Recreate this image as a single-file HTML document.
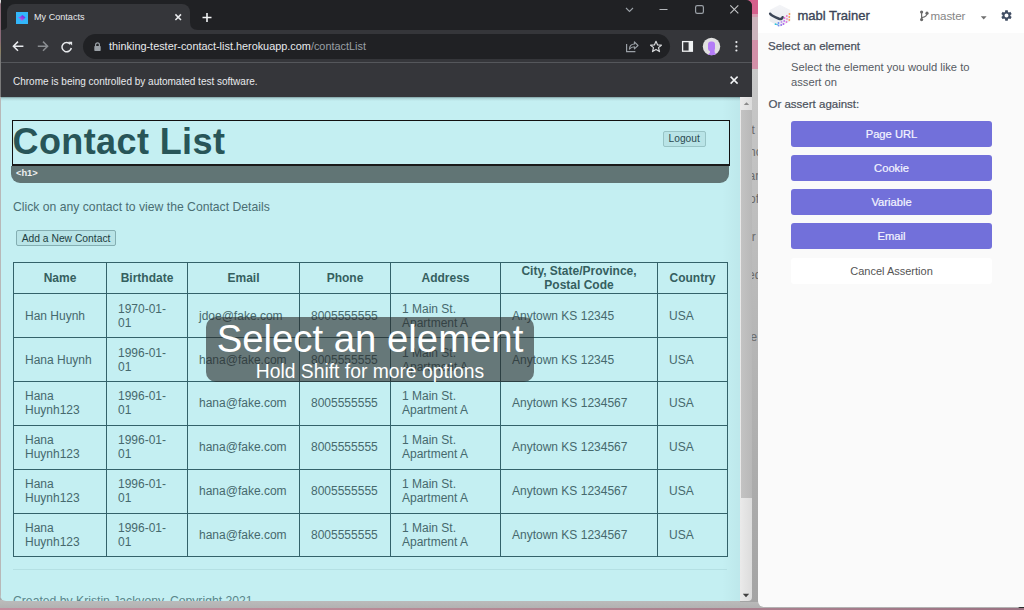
<!DOCTYPE html>
<html><head><meta charset="utf-8">
<style>
*{box-sizing:border-box;margin:0;padding:0}
html,body{width:1024px;height:610px;overflow:hidden;background:#a9a9a9;font-family:"Liberation Sans",sans-serif}
.a{position:absolute}
.nw{white-space:nowrap}
#pink{left:0;top:607.7px;width:1024px;height:3px;background:linear-gradient(90deg,#c48c9e,#b88a96 40%,#a77d8c 80%,#9a7282)}
#shade{left:0;top:600px;width:1024px;height:8px;background:linear-gradient(180deg,#bcbcbc,#b2b2b2)}
#strip{left:740px;top:0;width:20px;height:602px;background:linear-gradient(180deg,#d4608c 0,#d4608c 13.8px,#d89ab0 13.8px,#d89ab0 17px,#ccb5bd 17px,#ccb5bd 40px,#d290a8 40px,#d290a8 69px,#c8c8c8 69px,#a4a4a4 100%)}
#browser{left:1px;top:0;width:751px;height:97px;background:#35363a;border-top-right-radius:6px;overflow:hidden}
#frame{left:0;top:0;width:751px;height:30px;background:#202124}
#tab{left:6px;top:4px;width:183px;height:28px;background:#35363a;border-radius:8px 8px 0 0}
#omni{left:82px;top:34px;width:587px;height:25px;background:#202124;border-radius:13px}
#sep{left:0;top:62px;width:751px;height:1px;background:#55575b}
#info{left:0;top:63px;width:751px;height:34px;background:#35363a}
#page{left:0;top:97px;width:740px;height:504px;background:#c4eff2;border-bottom-left-radius:6px;overflow:hidden}
#sb{left:740px;top:97px;width:12px;height:504px;background:linear-gradient(90deg,#eaeaea,#dcdcdc);border-bottom-right-radius:4px;overflow:hidden}
#mabl{left:758px;top:0;width:266px;height:607px;background:#fafafa;border-bottom-left-radius:6px;overflow:hidden}
#mhead{left:0;top:0;width:266px;height:32.6px;background:#fff}
.btn{left:33px;width:201px;height:26.2px;background:#7270da;border-radius:3px;color:#f4f4ff;font-size:11.2px;text-align:center;line-height:26px;-webkit-text-stroke:0.2px #f4f4ff}

#hl{left:11.5px;top:23px;width:718px;height:45.6px;border:1px solid #111;border-bottom:2px solid #1a1a1a}
#hlbar{left:11px;top:68.5px;width:717.5px;height:17.2px;background:#617575;border-radius:0 0 9px 9px;color:#eef0f0;font-size:9.3px;padding:2.6px 0 0 5px;font-weight:bold}
#h1{left:12.5px;top:24px;font-size:36px;font-weight:bold;color:#285558;line-height:42px;letter-spacing:0.4px}
#logout{left:662.8px;top:33.8px;width:42.8px;height:16.5px;border:1px solid #98c4c6;border-radius:2px;background:#b9e4e7;font-size:10.2px;color:#2a4a50;text-align:center;line-height:14.5px}
#para{left:13px;top:102.5px;font-size:12.2px;color:#4a6e72;line-height:14px}
#addbtn{left:16.3px;top:132.5px;width:99.5px;height:16.2px;border:1px solid #84aeb2;border-radius:2px;background:#b9e4e7;font-size:10.3px;color:#213d40;text-align:center;line-height:15.5px}
#tbl{left:13px;top:165px;border-collapse:collapse;table-layout:fixed;color:#46696d;font-size:12px;line-height:14px}
#tbl td,#tbl th{border:1px solid #33626a;padding:0 11px;vertical-align:middle;text-align:left;height:43.85px}
#tbl th{font-weight:bold;text-align:center;color:#35605f;height:31.3px;padding:0 4px}
#hr{left:13px;top:472px;width:714px;height:1px;background:#b4e0e3}
#footer{left:13px;top:497px;font-size:12.2px;color:#5a868a;line-height:14px}
#ov{left:206px;top:220px;width:328px;height:65px;background:rgba(40,40,40,0.6);border-radius:10px}
#ovt1{left:206px;top:222px;width:328px;text-align:center;font-size:38.3px;color:#fff;line-height:40px}
#ovt2{left:206px;top:265px;width:328px;text-align:center;font-size:19.3px;color:#fff;line-height:20px}
</style></head><body>
<div id="shade" class="a"></div>
<div id="pink" class="a"></div>
<svg class="a" style="left:1016px;top:602px" width="8" height="8"><path d="M8 1 L8 6 L2 6 Q5 5 8 1 Z" fill="#2a2c2c"/></svg>
<div id="strip" class="a"></div>
<div class="a" style="left:0;top:0;width:1px;height:97px;background:linear-gradient(180deg,#ddd 0,#ddd 2px,#8a6a78 4px,#8a6a78 40px,#8a8060 50px,#7a7a7a 60px)"></div>
<div class="a" style="left:752px;top:69px;width:6px;height:532px;overflow:hidden;color:#6a6a6a;font-size:12px;line-height:14px">
  <div class="a nw" style="left:-0.5px;top:53.5px">t</div>
  <div class="a nw" style="left:-3px;top:75.7px">nc</div>
  <div class="a nw" style="left:-3.5px;top:100px">ar</div>
  <div class="a nw" style="left:-3px;top:123px">of</div>
  <div class="a nw" style="left:-3px;top:160.5px">ir</div>
  <div class="a nw" style="left:-4px;top:198.7px">ed</div>
  <div class="a nw" style="left:-1.5px;top:260.6px">e</div>
</div>

<div id="browser" class="a">
  <div id="frame" class="a"></div>
  <div id="tab" class="a"></div>
  <svg class="a" style="left:189px;top:22px" width="8" height="8"><path d="M0 0 Q0 8 8 8 L0 8 Z" fill="#35363a"/></svg>
  <svg class="a" style="left:1px;top:22px" width="6" height="8"><path d="M6 0 Q6 8 0 8 L6 8 Z" fill="#35363a"/></svg>
  <svg class="a" style="left:15px;top:12px" width="12" height="12"><rect width="12" height="12" fill="#33b6fa"/><defs><linearGradient id="fg" x1="0" y1="1" x2="1" y2="0"><stop offset="0" stop-color="#f068d8"/><stop offset="1" stop-color="#4a22ea"/></linearGradient></defs><path d="M1.9 5.4 Q4.6 5 6.3 2.9 L9.5 5.5 L5.8 8.9 Q4.8 6.2 1.9 5.4 Z" fill="url(#fg)"/></svg>
  <div class="a nw" style="left:33px;top:11px;font-size:9.1px;color:#e8eaed;line-height:12px">My Contacts</div>
  <svg class="a" style="left:172px;top:12px" width="10" height="10"><path d="M2.4 2.4 L8 8 M8 2.4 L2.4 8" stroke="#e8eaed" stroke-width="1.5"/></svg>
  <svg class="a" style="left:199px;top:11px" width="13" height="13"><path d="M7 2 V11 M2.5 6.5 H11.5" stroke="#f1f3f4" stroke-width="1.6"/></svg>
  <svg class="a" style="left:623px;top:5px" width="12" height="9"><path d="M2 3 L5.5 6.5 L9 3" stroke="#9aa0a6" stroke-width="1.1" fill="none"/></svg>
  <svg class="a" style="left:657px;top:7px" width="12" height="5"><path d="M1.5 2.5 H9.5" stroke="#b4b7bb" stroke-width="1.2"/></svg>
  <svg class="a" style="left:692px;top:3px" width="12" height="12"><rect x="2.6" y="2.6" width="7.8" height="7.8" rx="1.6" stroke="#9aa0a6" stroke-width="1.2" fill="none"/></svg>
  <svg class="a" style="left:727px;top:3px" width="12" height="12"><path d="M2.3 2.3 L10.3 10.3 M10.3 2.3 L2.3 10.3" stroke="#c4c6c8" stroke-width="1.1"/></svg>
  <div id="omni" class="a"></div>
  <svg class="a" style="left:10px;top:40px" width="14" height="13"><path d="M12.4 6.2 H2.6 M7 1.6 L2.4 6.2 L7 10.8" stroke="#e8eaed" stroke-width="1.5" fill="none"/></svg>
  <svg class="a" style="left:35px;top:40px" width="14" height="13"><path d="M1.8 6.2 H11.4 M7 1.6 L11.6 6.2 L7 10.8" stroke="#8a8d91" stroke-width="1.5" fill="none"/></svg>
  <svg class="a" style="left:59px;top:40px" width="14" height="14"><path d="M10.4 4.2 A4.7 4.7 0 1 0 11.3 8" stroke="#e8eaed" stroke-width="1.5" fill="none"/><path d="M8.4 1.8 L12.1 1.8 L12.1 5.5 Z" fill="#e8eaed"/></svg>
  <svg class="a" style="left:92px;top:41px" width="9" height="11"><path d="M2.6 5 V3.8 A1.9 1.9 0 0 1 6.4 3.8 V5" stroke="#9aa0a6" stroke-width="1.2" fill="none"/><rect x="1.3" y="5" width="6.4" height="5" rx="0.7" fill="#9aa0a6"/></svg>
  <div class="a nw" style="left:108px;top:39px;font-size:10.88px;color:#e8eaed;line-height:14px">thinking-tester-contact-list.herokuapp.com<span style="color:#9aa0a6">/contactList</span></div>
  <svg class="a" style="left:623.2px;top:40px" width="16" height="14"><path d="M2.6 4 V11.6 H11.4" stroke="#9aa0a6" stroke-width="1.2" fill="none"/><path d="M5.4 9.2 Q5.6 4.2 10.4 4 V1.8 L14 5.5 L10.4 8.8 V6.8 Q7.4 6.9 5.4 9.2 Z" stroke="#9aa0a6" stroke-width="1.1" fill="none" stroke-linejoin="round"/></svg>
  <svg class="a" style="left:648.3px;top:40px" width="14" height="13"><path d="M7 1.3 L8.6 5 L12.4 5.2 L9.5 7.6 L10.5 11.6 L7 9.4 L3.5 11.6 L4.5 7.6 L1.6 5.2 L5.4 5 Z" stroke="#d4d6d8" stroke-width="1.2" fill="none" stroke-linejoin="round"/></svg>
  <svg class="a" style="left:679px;top:39px" width="14" height="14"><rect x="2.6" y="2.6" width="9.8" height="9.6" stroke="#f1f3f4" stroke-width="1.3" fill="none"/><rect x="8.6" y="2.6" width="3.8" height="9.6" fill="#f1f3f4"/></svg>
  <svg class="a" style="left:701px;top:36.8px" width="19" height="19"><defs><clipPath id="av"><circle cx="9.5" cy="9.5" r="8.7"/></clipPath></defs><circle cx="9.5" cy="9.5" r="8.7" fill="#e0e0e0"/><g clip-path="url(#av)" fill="#b47cf7"><rect x="6" y="4.4" width="7" height="9.8" rx="3"/><path d="M8 13 H12.4 Q12.2 16 14.5 17 L15 19 H5 L6.5 17 Q8.6 16 8 13 Z"/></g></svg>
  <svg class="a" style="left:731px;top:39px" width="8" height="14"><circle cx="4.4" cy="3.1" r="1.1" fill="#e8eaed"/><circle cx="4.4" cy="7.4" r="1.1" fill="#e8eaed"/><circle cx="4.4" cy="11.5" r="1.1" fill="#e8eaed"/></svg>
  <div id="sep" class="a"></div>
  <div id="info" class="a"></div>
  <div class="a nw" style="left:12px;top:76px;font-size:10px;color:#e8eaed;line-height:12px">Chrome is being controlled by automated test software.</div>
  <svg class="a" style="left:727px;top:74px" width="12" height="12"><path d="M2.6 2.6 L9.6 9.6 M9.6 2.6 L2.6 9.6" stroke="#f1f3f4" stroke-width="1.5"/></svg>
</div>

<div id="page" class="a">
  <div class="a" style="left:0;top:0;width:740px;height:3.5px;background:linear-gradient(180deg,rgba(20,40,40,0.4),rgba(20,40,40,0.12) 40%,rgba(20,40,40,0))"></div>
  <div class="a" style="left:0;top:0;width:1px;height:505px;background:#b8b8b8"></div>
  <div class="a" id="hl"></div>
  <div class="a" id="hlbar"><span>&lt;h1&gt;</span></div>
  <div class="a nw" id="h1">Contact List</div>
  <div class="a nw" id="logout">Logout</div>
  <div class="a nw" id="para">Click on any contact to view the Contact Details</div>
  <div class="a nw" id="addbtn">Add a New Contact</div>
  <table id="tbl" class="a">
    <colgroup><col style="width:93px"><col style="width:81px"><col style="width:112px"><col style="width:91px"><col style="width:110px"><col style="width:157px"><col style="width:70px"></colgroup>
    <tr class="hd"><th>Name</th><th>Birthdate</th><th>Email</th><th>Phone</th><th>Address</th><th>City, State/Province, Postal Code</th><th>Country</th></tr>
    <tr><td>Han Huynh</td><td>1970-01-01</td><td>jdoe@fake.com</td><td>8005555555</td><td>1 Main St. Apartment A</td><td>Anytown KS 12345</td><td>USA</td></tr>
    <tr><td>Hana Huynh</td><td>1996-01-01</td><td>hana@fake.com</td><td>8005555555</td><td>1 Main St. Apartment A</td><td>Anytown KS 12345</td><td>USA</td></tr>
    <tr><td>Hana Huynh123</td><td>1996-01-01</td><td>hana@fake.com</td><td>8005555555</td><td>1 Main St. Apartment A</td><td>Anytown KS 1234567</td><td>USA</td></tr>
    <tr><td>Hana Huynh123</td><td>1996-01-01</td><td>hana@fake.com</td><td>8005555555</td><td>1 Main St. Apartment A</td><td>Anytown KS 1234567</td><td>USA</td></tr>
    <tr><td>Hana Huynh123</td><td>1996-01-01</td><td>hana@fake.com</td><td>8005555555</td><td>1 Main St. Apartment A</td><td>Anytown KS 1234567</td><td>USA</td></tr>
    <tr><td>Hana Huynh123</td><td>1996-01-01</td><td>hana@fake.com</td><td>8005555555</td><td>1 Main St. Apartment A</td><td>Anytown KS 1234567</td><td>USA</td></tr>
  </table>
  <div class="a" id="hr"></div>
  <div class="a nw" id="footer">Created by Kristin Jackvony, Copyright 2021</div>
  <div class="a" id="ov"></div>
  <div class="a nw" id="ovt1">Select an element</div>
  <div class="a nw" id="ovt2">Hold Shift for more options</div>
</div>
<div class="a" style="left:722px;top:97px;width:18px;height:504px;background:linear-gradient(90deg,rgba(0,30,40,0),rgba(0,30,40,0.035))"></div>
<div id="sb" class="a">
  <div class="a" style="left:1px;top:13px;width:11px;height:388px;background:linear-gradient(90deg,#c3c3c3,#b8b8b8)"></div>
  <svg class="a" style="left:3px;top:4px" width="7" height="5"><path d="M0.8 4 L3.5 1.2 L6.2 4 Z" fill="#8a8a8a"/></svg>
  <svg class="a" style="left:1.8px;top:495.5px" width="8" height="5"><path d="M0.8 0.8 L4 4.2 L7.2 0.8 Z" fill="#404040"/></svg>
</div>

<div id="mabl" class="a">
  <div id="mhead" class="a"></div>
  <svg class="a" style="left:10px;top:4px" width="24" height="24">
    <defs><linearGradient id="cg" x1="0" y1="0" x2="0" y2="1"><stop offset="0" stop-color="#f3f4f7"/><stop offset="1" stop-color="#e9ebef"/></linearGradient></defs>
    <path d="M11.8 0.8 L22.3 6 V17.2 L11.8 22.8 L1.7 17.2 V6 Z" fill="url(#cg)"/>
    <path d="M2.2 9.8 Q3 11.5 11 14.8 Q14 15.6 14.6 13.2" stroke="#3b4557" stroke-width="2.6" fill="none" stroke-linecap="round"/>
    <g>
      <circle cx="21.5" cy="10" r="0.9" fill="#fb9b4f"/><circle cx="21.3" cy="13" r="0.9" fill="#fb9b4f"/><circle cx="21.3" cy="16" r="0.9" fill="#f7a060"/>
      <circle cx="18.8" cy="12" r="0.9" fill="#f06ec8"/><circle cx="19" cy="15" r="0.9" fill="#f090c0"/><circle cx="18.5" cy="18" r="0.9" fill="#e070e0"/>
      <circle cx="16.5" cy="14" r="0.9" fill="#e060e0"/><circle cx="16.2" cy="17" r="0.9" fill="#c070f0"/><circle cx="15.5" cy="20" r="0.9" fill="#b060f0"/>
      <circle cx="13.5" cy="18" r="0.9" fill="#c090f0"/><circle cx="13.2" cy="21" r="0.9" fill="#9070f0"/>
      <circle cx="10.5" cy="19" r="0.9" fill="#6a8af0"/><circle cx="10.5" cy="21.5" r="0.9" fill="#7090f0"/>
      <circle cx="7.5" cy="20.2" r="0.9" fill="#2fc8d8"/><circle cx="9" cy="20.5" r="0.8" fill="#40b0e8"/>
    </g>
  </svg>
  <div class="a nw" style="left:39.5px;top:7.5px;font-size:13px;color:#3b4557;line-height:16px;-webkit-text-stroke:0.35px #3b4557">mabl Trainer</div>
  <svg class="a" style="left:161px;top:10px" width="11" height="12"><circle cx="2.6" cy="2" r="1.6" fill="#6b6b6b"/><circle cx="2.6" cy="9.6" r="1.6" fill="#6b6b6b"/><circle cx="8" cy="3.2" r="1.6" fill="#6b6b6b"/><path d="M2.6 2 V9.6 M8 3.2 Q8 6.8 2.8 7.6" stroke="#6b6b6b" stroke-width="1.2" fill="none"/></svg>
  <div class="a nw" style="left:172.5px;top:9.3px;font-size:11.6px;color:#858585;line-height:14px;letter-spacing:-0.1px">master</div>
  <svg class="a" style="left:222px;top:14.7px" width="8" height="6"><path d="M0.8 1.2 H6.6 L3.7 4.4 Z" fill="#6f6f6f"/></svg>
  <svg class="a" style="left:242px;top:9px" width="13" height="13" viewBox="0 0 24 24"><path fill="#3f4c62" d="M19.14 12.94c.04-.3.06-.61.06-.94 0-.32-.02-.64-.07-.94l2.03-1.58c.18-.14.23-.41.12-.61l-1.92-3.32c-.12-.22-.37-.29-.59-.22l-2.39.96c-.5-.38-1.03-.7-1.62-.94l-.36-2.54c-.04-.24-.24-.41-.48-.41h-3.84c-.24 0-.43.17-.47.41l-.36 2.54c-.59.24-1.13.57-1.62.94l-2.39-.96c-.22-.08-.47 0-.59.22L2.74 8.87c-.12.21-.08.47.12.61l2.03 1.58c-.05.3-.09.63-.09.94s.02.64.07.94l-2.03 1.58c-.18.14-.23.41-.12.61l1.92 3.32c.12.22.37.29.59.22l2.39-.96c.5.38 1.03.7 1.62.94l.36 2.54c.05.24.24.41.48.41h3.84c.24 0 .44-.17.47-.41l.36-2.54c.59-.24 1.13-.56 1.62-.94l2.39.96c.22.08.47 0 .59-.22l1.92-3.32c.12-.22.07-.47-.12-.61l-2.01-1.58zM12 15.6c-1.98 0-3.6-1.62-3.6-3.6s1.62-3.6 3.6-3.6 3.6 1.62 3.6 3.6-1.62 3.6-3.6 3.6z"/></svg>
  <div class="a nw" style="left:10px;top:39px;font-size:11.5px;color:#4b515c;line-height:14px;-webkit-text-stroke:0.25px #4b515c">Select an element</div>
  <div class="a" style="left:33px;top:60px;width:200px;font-size:11.2px;color:#565b63;line-height:14.6px">Select the element you would like to assert on</div>
  <div class="a nw" style="left:10.5px;top:97px;font-size:11.5px;color:#4b515c;line-height:14px;-webkit-text-stroke:0.2px #4b515c">Or assert against:</div>
  <div class="a btn" style="top:121px">Page URL</div>
  <div class="a btn" style="top:155px">Cookie</div>
  <div class="a btn" style="top:189px">Variable</div>
  <div class="a btn" style="top:223px">Email</div>
  <div class="a btn" style="top:258px;background:#fff;color:#555;font-size:11px;-webkit-text-stroke:0">Cancel Assertion</div>
</div>
</body></html>
